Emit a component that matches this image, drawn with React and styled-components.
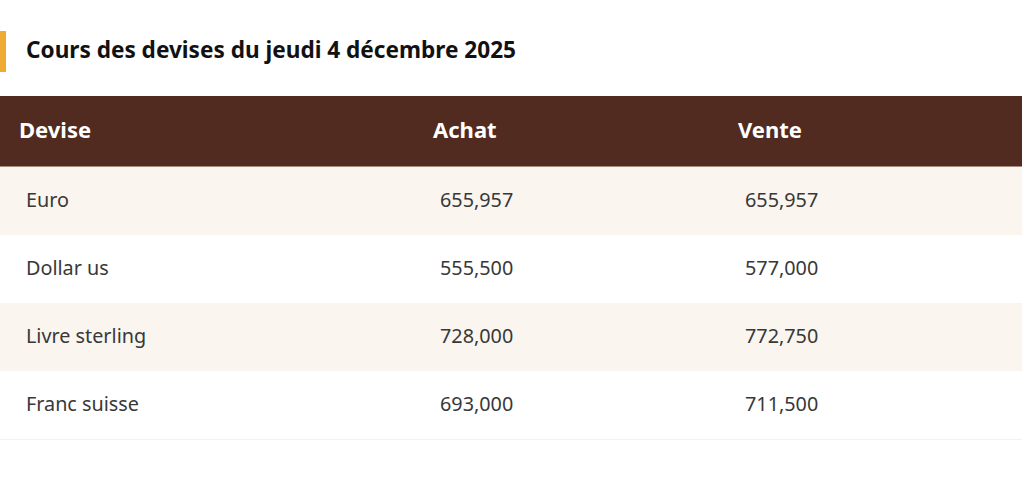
import React from 'react';
import styled, { createGlobalStyle } from 'styled-components';

const GlobalStyle = createGlobalStyle`
  html, body {
    margin: 0;
    padding: 0;
    background: #fff;
    font-family: "Noto Sans", "Open Sans", sans-serif;
  }
`;

const Page = styled.div`
  width: 1022px;
  padding-top: 31px;
`;

const Title = styled.h2`
  margin: 0 0 24px;
  height: 41px;
  display: flex;
  align-items: center;
  padding-left: 20px;
  padding-bottom: 4px;
  box-sizing: border-box;
  border-left: 6px solid #f0ab33;
  font-size: 22.6px;
  font-weight: 700;
  color: #111;
`;

const Table = styled.div`
  display: grid;
  grid-template-columns: 414px 305px 1fr;
  border-bottom: 1px solid #f6f1ec;
`;

const HeadCell = styled.div`
  height: 71px;
  display: flex;
  align-items: center;
  padding-left: 19px;
  padding-bottom: 4px;
  box-sizing: border-box;
  background: #512b20;
  border-bottom: 1px solid #a88a7f;
  color: #fff;
  font-size: 22px;
  font-weight: 700;
`;

const Cell = styled.div`
  height: 68px;
  display: flex;
  align-items: center;
  padding-left: 26px;
  padding-bottom: 3px;
  box-sizing: border-box;
  background: ${(p) => (p.$striped ? '#faf5ef' : '#fff')};
  color: #383838;
  font-size: 19.8px;
`;

const rates = [
  { name: 'Euro', buy: '655,957', sell: '655,957' },
  { name: 'Dollar us', buy: '555,500', sell: '577,000' },
  { name: 'Livre sterling', buy: '728,000', sell: '772,750' },
  { name: 'Franc suisse', buy: '693,000', sell: '711,500' },
];

export default function App() {
  return (
    <Page>
      <GlobalStyle />
      <Title>Cours des devises du jeudi 4 décembre 2025</Title>
      <Table>
        <HeadCell>Devise</HeadCell>
        <HeadCell>Achat</HeadCell>
        <HeadCell>Vente</HeadCell>
        {rates.map((r, i) => (
          <React.Fragment key={r.name}>
            <Cell $striped={i % 2 === 0}>{r.name}</Cell>
            <Cell $striped={i % 2 === 0}>{r.buy}</Cell>
            <Cell $striped={i % 2 === 0}>{r.sell}</Cell>
          </React.Fragment>
        ))}
      </Table>
    </Page>
  );
}
